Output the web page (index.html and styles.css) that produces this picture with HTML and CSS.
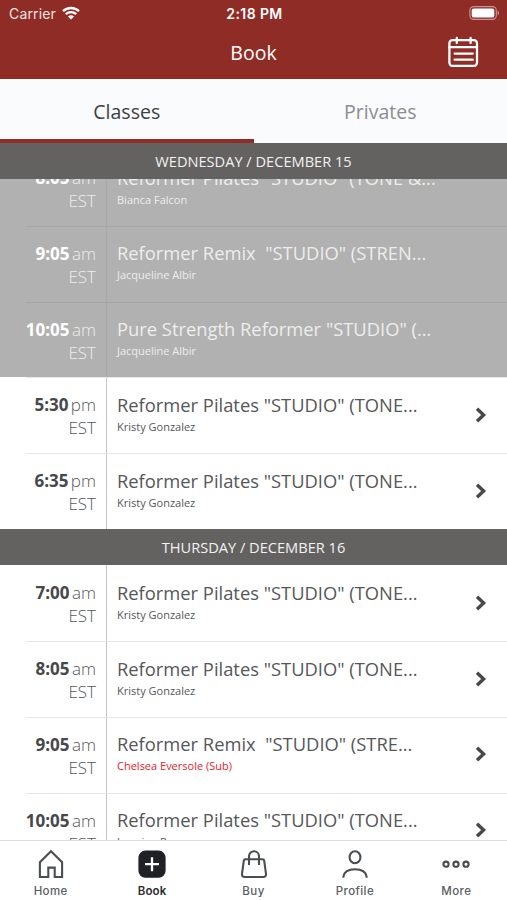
FILE: index.html
```
<!DOCTYPE html>
<html lang="en">
<head>
    <meta charset="UTF-8">
    <meta name="viewport" content="width=device-width, initial-scale=1.0">
    <title>Book</title>
    <link rel="stylesheet" href="styles.css">
</head>
<body>

    <header>
        <div class="status-bar">
            <div class="carrier">
                <span>Carrier</span>
                <svg class="wifi" width="18" height="14" viewBox="0 0 18 14">
                    <path d="M1 5.2a11.6 11.6 0 0 1 16 0" />
                    <path d="M3.8 8.1a7.6 7.6 0 0 1 10.4 0" />
                    <path class="dot" d="M9 13.6L5.9 10.6a4.5 4.5 0 0 1 6.2 0z" />
                </svg>
            </div>
            <div class="clock">2:18 PM</div>
            <div class="battery">
                <svg width="31" height="14" viewBox="0 0 31 14">
                    <rect class="case" x="0.9" y="0.6" width="26.4" height="12.8" rx="3.8" />
                    <rect x="2.7" y="2.4" width="22.6" height="9.2" rx="2.2" fill="#fff" />
                    <path d="M28.6 4.8c1.9.6 1.9 3.8 0 4.4z" fill="#fff" opacity=".5" />
                </svg>
            </div>
        </div>
        <div class="title-bar">
            <h1>Book</h1>
            <svg class="calendar" width="32" height="32" viewBox="0 0 32 32">
                <rect x="2.4" y="4.2" width="27.6" height="25.6" rx="3" />
                <path d="M2.4 11.2H30M9.8 2v5M23.6 2v5M7.6 17.6h18.2M7.6 23.7h18.2" />
            </svg>
        </div>
    </header>

    <nav class="tabs">
        <a class="tab active">Classes</a>
        <a class="tab">Privates</a>
    </nav>

    <h2 class="day">WEDNESDAY / DECEMBER 15</h2>

    <main class="schedule">
        <section class="class-list first">
            <div class="class-row past">
                <div class="time"><b>8:05</b> am<br>EST</div>
                <div class="info">
                    <h3>Reformer Pilates "STUDIO" (TONE &amp;...</h3>
                    <p>Bianca Falcon</p>
                </div>
            </div>
            <div class="class-row past">
                <div class="time"><b>9:05</b> am<br>EST</div>
                <div class="info">
                    <h3>Reformer Remix&nbsp; "STUDIO" (STREN...</h3>
                    <p>Jacqueline Albir</p>
                </div>
            </div>
            <div class="class-row past">
                <div class="time"><b>10:05</b> am<br>EST</div>
                <div class="info">
                    <h3>Pure Strength Reformer "STUDIO" (...</h3>
                    <p>Jacqueline Albir</p>
                </div>
            </div>
            <div class="class-row">
                <div class="time"><b>5:30</b> pm<br>EST</div>
                <div class="info">
                    <h3>Reformer Pilates "STUDIO" (TONE...</h3>
                    <p>Kristy Gonzalez</p>
                </div>
                <svg class="arrow" viewBox="0 0 12 16"><path d="M2 1.7L8.6 8L2 14.3" /></svg>
            </div>
            <div class="class-row">
                <div class="time"><b>6:35</b> pm<br>EST</div>
                <div class="info">
                    <h3>Reformer Pilates "STUDIO" (TONE...</h3>
                    <p>Kristy Gonzalez</p>
                </div>
                <svg class="arrow" viewBox="0 0 12 16"><path d="M2 1.7L8.6 8L2 14.3" /></svg>
            </div>
        </section>

        <h2 class="day">THURSDAY / DECEMBER 16</h2>

        <section class="class-list">
            <div class="class-row">
                <div class="time"><b>7:00</b> am<br>EST</div>
                <div class="info">
                    <h3>Reformer Pilates "STUDIO" (TONE...</h3>
                    <p>Kristy Gonzalez</p>
                </div>
                <svg class="arrow" viewBox="0 0 12 16"><path d="M2 1.7L8.6 8L2 14.3" /></svg>
            </div>
            <div class="class-row">
                <div class="time"><b>8:05</b> am<br>EST</div>
                <div class="info">
                    <h3>Reformer Pilates "STUDIO" (TONE...</h3>
                    <p>Kristy Gonzalez</p>
                </div>
                <svg class="arrow" viewBox="0 0 12 16"><path d="M2 1.7L8.6 8L2 14.3" /></svg>
            </div>
            <div class="class-row">
                <div class="time"><b>9:05</b> am<br>EST</div>
                <div class="info">
                    <h3>Reformer Remix&nbsp; "STUDIO" (STRE...</h3>
                    <p class="sub">Chelsea Eversole (Sub)</p>
                </div>
                <svg class="arrow" viewBox="0 0 12 16"><path d="M2 1.7L8.6 8L2 14.3" /></svg>
            </div>
            <div class="class-row">
                <div class="time"><b>10:05</b> am<br>EST</div>
                <div class="info">
                    <h3>Reformer Pilates "STUDIO" (TONE...</h3>
                    <p>Jasmine Perez</p>
                </div>
                <svg class="arrow" viewBox="0 0 12 16"><path d="M2 1.7L8.6 8L2 14.3" /></svg>
            </div>
        </section>
    </main>

    <footer>
        <a class="menu-item">
            <svg viewBox="0 0 30 30">
                <path d="M3.9 28V13.2L15 2.2L26.1 13.2V28H18.7V18.6H12.3V28z" />
            </svg>
            <span>Home</span>
        </a>
        <a class="menu-item active">
            <svg viewBox="0 0 30 30">
                <rect class="solid" x="1.4" y="1.6" width="27.2" height="27.2" rx="7" />
                <path class="plus" d="M15 8.2v14M8 15.2h14" />
            </svg>
            <span>Book</span>
        </a>
        <a class="menu-item">
            <svg viewBox="0 0 30 30">
                <path d="M6.4 10.2H23.6Q25 10.2 25.2 11.6L27 24.8Q27.3 28 24.2 28H5.8Q2.7 28 3 24.8L4.8 11.6Q5 10.2 6.4 10.2z" />
                <path d="M10 16V7.2a5 5 0 0 1 10 0V16" />
            </svg>
            <span>Buy</span>
        </a>
        <a class="menu-item">
            <svg viewBox="0 0 30 30">
                <ellipse cx="15" cy="8.3" rx="5.4" ry="6" />
                <path d="M3.4 28.8v-1.2C4.2 22.4 9 20.2 15 20.2s10.8 2.200 11.600 7.400v1.200" />
            </svg>
            <span>Profile</span>
        </a>
        <a class="menu-item">
            <svg viewBox="0 0 30 30">
                <circle cx="5" cy="15.2" r="2.6" />
                <circle cx="15" cy="15.2" r="2.6" />
                <circle cx="25" cy="15.2" r="2.6" />
            </svg>
            <span>More</span>
        </a>
    </footer>

</body>
</html>
```
FILE: styles.css
```
body {
    font-family: "Open Sans", sans-serif;
    margin: 0;
    height: 900px;
    display: flex;
    flex-direction: column;
    overflow: hidden;
    background-color: #fff;
    color: #55575a;
}

h1, h2, h3, p {
    margin: 0;
    font-weight: 400;
}

svg {
    fill: none;
    display: block;
}

header {
    height: 79px;
    flex: none;
    background-color: #8f2c26;
    color: #fff;
}

.status-bar {
    display: grid;
    grid-template-columns: 1fr auto 1fr;
    align-items: center;
    height: 27px;
    padding: 0 7px 0 9px;
    font-family: Inter, sans-serif;
    font-size: 14px;
}

.carrier {
    display: flex;
    align-items: center;
    gap: 6px;
    letter-spacing: 0.15px;
    color: #f6e4e2;
}

.wifi {
    stroke: #fff;
    stroke-width: 2.3;
    margin-top: -2px;
}

.wifi .dot {
    fill: #fff;
    stroke: none;
}

.clock {
    font-weight: 600;
    letter-spacing: 0.4px;
}

.battery {
    justify-self: end;
}

.battery svg {
    margin-top: -1px;
}

.battery .case {
    stroke: #fff;
    stroke-width: 1.1;
    opacity: 0.5;
}

.title-bar {
    display: grid;
    grid-template-columns: 1fr auto 1fr;
    align-items: center;
    height: 50px;
}

.title-bar h1 {
    grid-column: 2;
    font-size: 19.5px;
    line-height: 26px;
    padding-top: 1px;
}

.calendar {
    justify-self: end;
    margin-right: 28px;
    stroke: #fff;
    stroke-width: 2.3;
    stroke-linecap: round;
}

.tabs {
    display: flex;
    flex: none;
    height: 63.5px;
    background-color: #f9fbfd;
}

.tab {
    flex: 1;
    box-sizing: border-box;
    border-bottom: 4px solid transparent;
    text-align: center;
    font-size: 19.5px;
    line-height: 66px;
    color: #8b8d92;
}

.tab.active {
    color: #3d4044;
    border-bottom-color: #8f2c26;
}

.day {
    height: 36.5px;
    flex: none;
    background-color: #636260;
    color: #f2f2f2;
    text-align: center;
    font-size: 14.6px;
    line-height: 36px;
}

.schedule {
    flex: 1;
    min-height: 0;
    overflow: hidden;
}

.class-list.first {
    margin-top: -28.8px;
}

.class-row {
    display: flex;
    position: relative;
    height: 75.75px;
}

/* divider starts under the time, not at the screen edge */
.class-row::before {
    content: "";
    position: absolute;
    left: 26px;
    right: 0;
    top: 0;
    height: 1px;
    background-color: #e6e6e6;
}

.class-row:first-child::before {
    display: none;
}

.time {
    box-sizing: border-box;
    width: 107px;
    padding: 15.8px 10px 0 0;
    border-right: 1px solid #c4c4c4;
    text-align: right;
    font-size: 17px;
    font-weight: 300;
    line-height: 23px;
    word-spacing: -2px;
}

.time b {
    font-weight: 700;
    color: #47484a;
}

.info {
    flex: 1;
    padding: 14.4px 0 0 10px;
    white-space: nowrap;
}

.info h3 {
    font-size: 18.35px;
    line-height: 25px;
}

.info p {
    font-size: 11px;
    line-height: 16px;
    margin-top: 2px;
}

.info .sub {
    color: #e8202a;
}

.arrow {
    width: 12px;
    height: 16px;
    margin: 29.5px 20px 0 0;
    stroke: #47484a;
    stroke-width: 3.4;
}

.past {
    background-color: #b1b1b1;
    color: #ededed;
}

.past::before {
    background-color: #a6a6a6;
}

.past .time {
    border-right-color: #a9a9a9;
}

.past .time b {
    color: #fff;
}

footer {
    display: flex;
    flex: none;
    box-sizing: border-box;
    height: 60px;
    border-top: 1px solid #dcdcdc;
    background-color: #fff;
}

.menu-item {
    flex: 1;
    display: flex;
    flex-direction: column;
    align-items: center;
    padding-top: 7.5px;
    font-family: Inter, sans-serif;
    font-size: 11.5px;
    font-weight: 500;
    letter-spacing: 0.4px;
    line-height: 16px;
    color: #5a5d62;
}

.menu-item svg {
    width: 30px;
    height: 30px;
    margin-bottom: 4px;
    stroke: #4a4d51;
    stroke-width: 2.1;
}

.menu-item .solid {
    fill: #1f2124;
    stroke: none;
}

.menu-item .plus {
    stroke: #fff;
    stroke-width: 2.3;
}

.menu-item.active {
    color: #2a2c2f;
    font-weight: 600;
    letter-spacing: 0.2px;
}
```
